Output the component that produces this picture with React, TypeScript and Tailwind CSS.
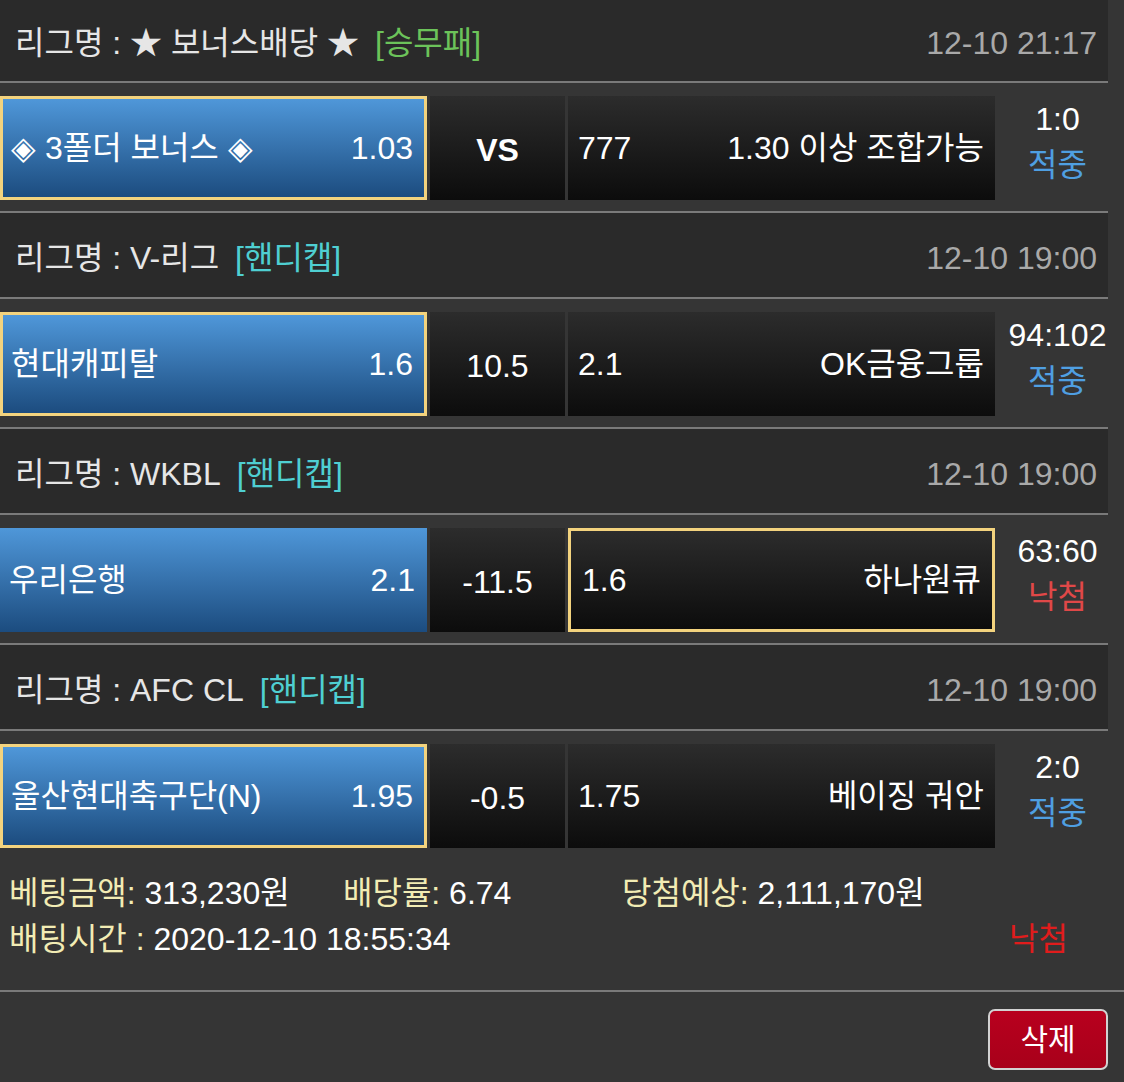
import React from "react";

const FONT = { fontFamily: '"Liberation Sans", "Noto Sans CJK KR", Arial, sans-serif' };

type Row = {
  league: string;
  tag: string;
  tagColor: string;
  date: string;
  home: string;
  homeOdds: string;
  mid: string;
  midBold?: boolean;
  awayOdds: string;
  away: string;
  pick: "home" | "away";
  score: string;
  result: string;
  resultColor: string;
};

const rows: Row[] = [
  {
    league: "리그명 : ★ 보너스배당 ★",
    tag: "[승무패]",
    tagColor: "text-[#6cc35a]",
    date: "12-10 21:17",
    home: "◈ 3폴더 보너스 ◈",
    homeOdds: "1.03",
    mid: "VS",
    midBold: true,
    awayOdds: "777",
    away: "1.30 이상 조합가능",
    pick: "home",
    score: "1:0",
    result: "적중",
    resultColor: "text-[#4f9fe2]",
  },
  {
    league: "리그명 : V-리그",
    tag: "[핸디캡]",
    tagColor: "text-[#4fcfd2]",
    date: "12-10 19:00",
    home: "현대캐피탈",
    homeOdds: "1.6",
    mid: "10.5",
    awayOdds: "2.1",
    away: "OK금융그룹",
    pick: "home",
    score: "94:102",
    result: "적중",
    resultColor: "text-[#4f9fe2]",
  },
  {
    league: "리그명 : WKBL",
    tag: "[핸디캡]",
    tagColor: "text-[#4fcfd2]",
    date: "12-10 19:00",
    home: "우리은행",
    homeOdds: "2.1",
    mid: "-11.5",
    awayOdds: "1.6",
    away: "하나원큐",
    pick: "away",
    score: "63:60",
    result: "낙첨",
    resultColor: "text-[#e04848]",
  },
  {
    league: "리그명 : AFC CL",
    tag: "[핸디캡]",
    tagColor: "text-[#4fcfd2]",
    date: "12-10 19:00",
    home: "울산현대축구단(N)",
    homeOdds: "1.95",
    mid: "-0.5",
    awayOdds: "1.75",
    away: "베이징 궈안",
    pick: "home",
    score: "2:0",
    result: "적중",
    resultColor: "text-[#4f9fe2]",
  },
];

function Header({ r, first }: { r: Row; first: boolean }) {
  return (
    <div
      className={
        "w-[1108px] bg-[#2a2a2a] border-b-2 border-[#7a7a7a] flex items-center justify-between pl-[15px] pr-[11px] " +
        (first ? "h-[83px] pt-[4px]" : "h-[88px] border-t-2 pt-[5px]")
      }
    >
      <div className="flex items-center">
        <span className="text-[#e6e6e6]">{r.league}</span>
        <span className={"ml-[16px] " + r.tagColor}>{r.tag}</span>
      </div>
      <span className="text-[#a9a9a9]">{r.date}</span>
    </div>
  );
}

function BetRow({ r }: { r: Row }) {
  const blue = "bg-[linear-gradient(to_bottom,#4f97d9,#1c4c7f)]";
  const dark = "bg-[linear-gradient(to_bottom,#2c2c2c,#0c0c0c)]";
  const sel = "border-[3px] border-[#f3d37e]";
  return (
    <div className="h-[128px] pt-[13px] pb-[11px] flex">
      <div
        className={
          "w-[427px] h-[104px] flex items-center justify-between text-white " +
          blue +
          " " +
          (r.pick === "home" ? sel + " pl-[8px] pr-[11px]" : "pl-[9px] pr-[12px]")
        }
      >
        <span>{r.home}</span>
        <span>{r.homeOdds}</span>
      </div>
      <div
        className={
          "ml-[3px] w-[135px] h-[104px] flex items-center justify-center text-white pt-[4px] " +
          dark +
          (r.midBold ? " font-bold" : "")
        }
      >
        {r.mid}
      </div>
      <div
        className={
          "ml-[3px] w-[427px] h-[104px] flex items-center justify-between text-white " +
          dark +
          " " +
          (r.pick === "away" ? sel + " pl-[11px] pr-[11px]" : "pl-[10px] pr-[11px]")
        }
      >
        <span>{r.awayOdds}</span>
        <span>{r.away}</span>
      </div>
      <div className="w-[125px] h-[104px] flex flex-col items-center justify-center pb-[12px] leading-[46px]">
        <span className="text-white">{r.score}</span>
        <span className={r.resultColor}>{r.result}</span>
      </div>
    </div>
  );
}

export default function App() {
  return (
    <div
      style={FONT}
      className="w-[1124px] h-[1082px] bg-[#353535] text-[32px] leading-none overflow-hidden"
    >
      {rows.map((r, i) => (
        <div key={i}>
          <Header r={r} first={i === 0} />
          <BetRow r={r} />
        </div>
      ))}
      <div className="pt-[11px] pb-[28px] leading-[46px] text-[32px]">
        <div className="flex pl-[9px]">
          <span className="w-[334px]">
            <span className="text-[#f2ecb4]">베팅금액: </span>
            <span className="text-white">313,230원</span>
          </span>
          <span className="w-[279px]">
            <span className="text-[#f2ecb4]">배당률: </span>
            <span className="text-white">6.74</span>
          </span>
          <span>
            <span className="text-[#f2ecb4]">당첨예상: </span>
            <span className="text-white">2,111,170원</span>
          </span>
        </div>
        <div className="flex justify-between pl-[9px] pr-[56px]">
          <span>
            <span className="text-[#f2ecb4]">배팅시간 : </span>
            <span className="text-white">2020-12-10 18:55:34</span>
          </span>
          <span className="text-[#e01c1c]">낙첨</span>
        </div>
      </div>
      <div className="border-t-2 border-[#7a7a7a] flex justify-end pr-[16px] pt-[17px]">
        <button className="w-[120px] h-[61px] rounded-[7px] border-2 border-[#d2d2d2] bg-[linear-gradient(to_bottom,#b8001e,#a8001a)] text-white text-[30px] flex items-center justify-center">
          삭제
        </button>
      </div>
    </div>
  );
}
